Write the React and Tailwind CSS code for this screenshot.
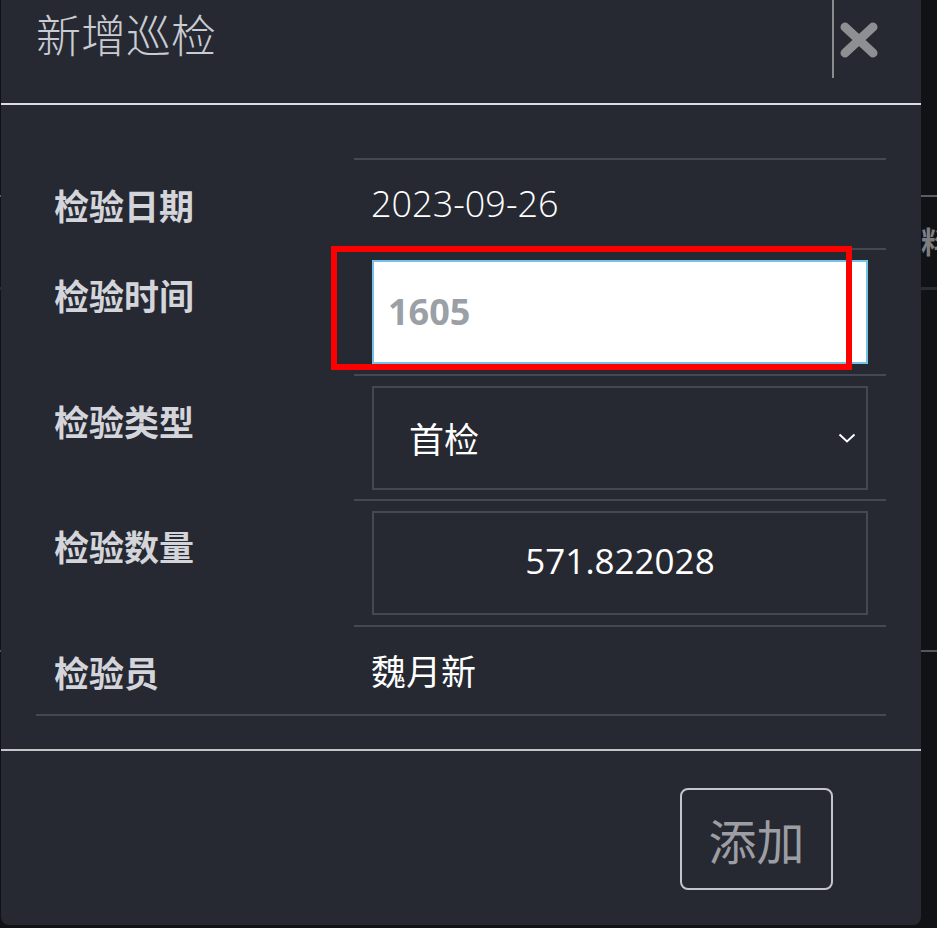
import React from 'react';

const cjk = { fontFamily: '"Noto Sans CJK SC", "Noto Sans", sans-serif' };
const num = { fontFamily: '"Open Sans", "Noto Sans CJK SC", sans-serif' };

const Label = ({ children }) => (
  <div
    className="pl-[18px] pt-[29px] text-[35px] leading-[35px] font-bold text-[#d3d5db]"
    style={cjk}
  >
    {children}
  </div>
);

const CloseIcon = () => (
  <svg width="38" height="36" viewBox="0 0 38 36" className="mt-[22px] ml-[6px]">
    <path d="M5 5 L33 31 M33 5 L5 31" stroke="#8e8f93" strokeWidth="9" strokeLinecap="round" />
  </svg>
);

const Chevron = () => (
  <svg width="18" height="10" viewBox="0 0 18 10">
    <path d="M1.5 1.5 L9 8.5 L16.5 1.5" fill="none" stroke="#ffffff" strokeWidth="2" />
  </svg>
);

export default function App() {
  return (
    <div className="relative w-[937px] h-[928px] overflow-hidden bg-[#111216]">
      {/* page behind the dialog */}
      <div className="flex flex-col">
        <div className="mt-[195px] h-[2px] bg-[#5c5d62]" />
        <div className="h-[90px] pl-[921px] pt-[28px] text-[30px] leading-[30px] font-bold text-[#7d7e82] overflow-hidden whitespace-nowrap" style={cjk}>
          料
        </div>
        <div className="h-[3px] bg-[#2a2c33]" />
        <div className="mt-[360px] h-[2px] bg-[#55575c]" />
      </div>

      {/* dialog */}
      <div className="absolute left-[1px] top-0 w-[920px] h-[925px] bg-[#262932] rounded-b-[8px] flex flex-col">
        <div className="flex justify-between h-[105px] border-b-2 border-[#dcdde0]">
          <div
            className="pl-[35px] pt-[11px] text-[45px] leading-[45px] font-light text-[#c9ccd2]"
            style={cjk}
          >
            新增巡检
          </div>
          <div className="flex items-start mr-[43px]">
            <div className="w-[2px] h-[78px] bg-[#8a8b8e]" />
            <CloseIcon />
          </div>
        </div>

        <div className="relative px-[35px] pt-[53px] pb-[33px]">
          <div className="grid grid-cols-[318px_1fr] border-b-2 border-[#444855]">
            <Label>检验日期</Label>
            <div className="h-[90px] border-t-2 border-[#444855] flex items-center pl-[17px]">
              <span className="text-[36px] font-light text-white" style={num}>2023-09-26</span>
            </div>

            <Label>检验时间</Label>
            <div className="border-t-2 border-[#444855] pl-[18px] pr-[18px] py-[10px]">
              <div className="h-[104px] bg-white border-2 border-[#74c3e6] flex items-center pl-[14px]">
                <span className="text-[36px] font-bold text-[#9aa0a6]" style={num}>1605</span>
              </div>
            </div>

            <Label>检验类型</Label>
            <div className="border-t-2 border-[#444855] pl-[18px] pr-[18px] pt-[10px] pb-[9px]">
              <div className="h-[104px] border-2 border-[#444855] flex items-center justify-between pl-[35px] pr-[10px]">
                <span className="text-[35px] text-white" style={cjk}>首检</span>
                <Chevron />
              </div>
            </div>

            <Label>检验数量</Label>
            <div className="border-t-2 border-[#444855] pl-[18px] pr-[18px] py-[10px]">
              <div className="h-[104px] border-2 border-[#444855] flex items-center justify-center pb-[4px]">
                <span className="text-[35px] text-white" style={num}>571.822028</span>
              </div>
            </div>

            <Label>检验员</Label>
            <div className="h-[89px] border-t-2 border-[#444855] flex items-center pl-[17px]">
              <span className="text-[35px] text-white" style={cjk}>魏月新</span>
            </div>
          </div>

          {/* red highlight annotation */}
          <div className="absolute left-[330px] top-[141px] w-[521px] h-[124px] border-[6px] border-[#ff0000] pointer-events-none" />
        </div>

        <div className="flex justify-end border-t-2 border-[#c3c5c9] pt-[37px] pr-[88px]">
          <button
            className="w-[153px] h-[102px] border-2 border-[#c3c5c9] rounded-[8px] text-[48px] text-[#9c9ea3]"
            style={cjk}
          >
            添加
          </button>
        </div>
      </div>
    </div>
  );
}
